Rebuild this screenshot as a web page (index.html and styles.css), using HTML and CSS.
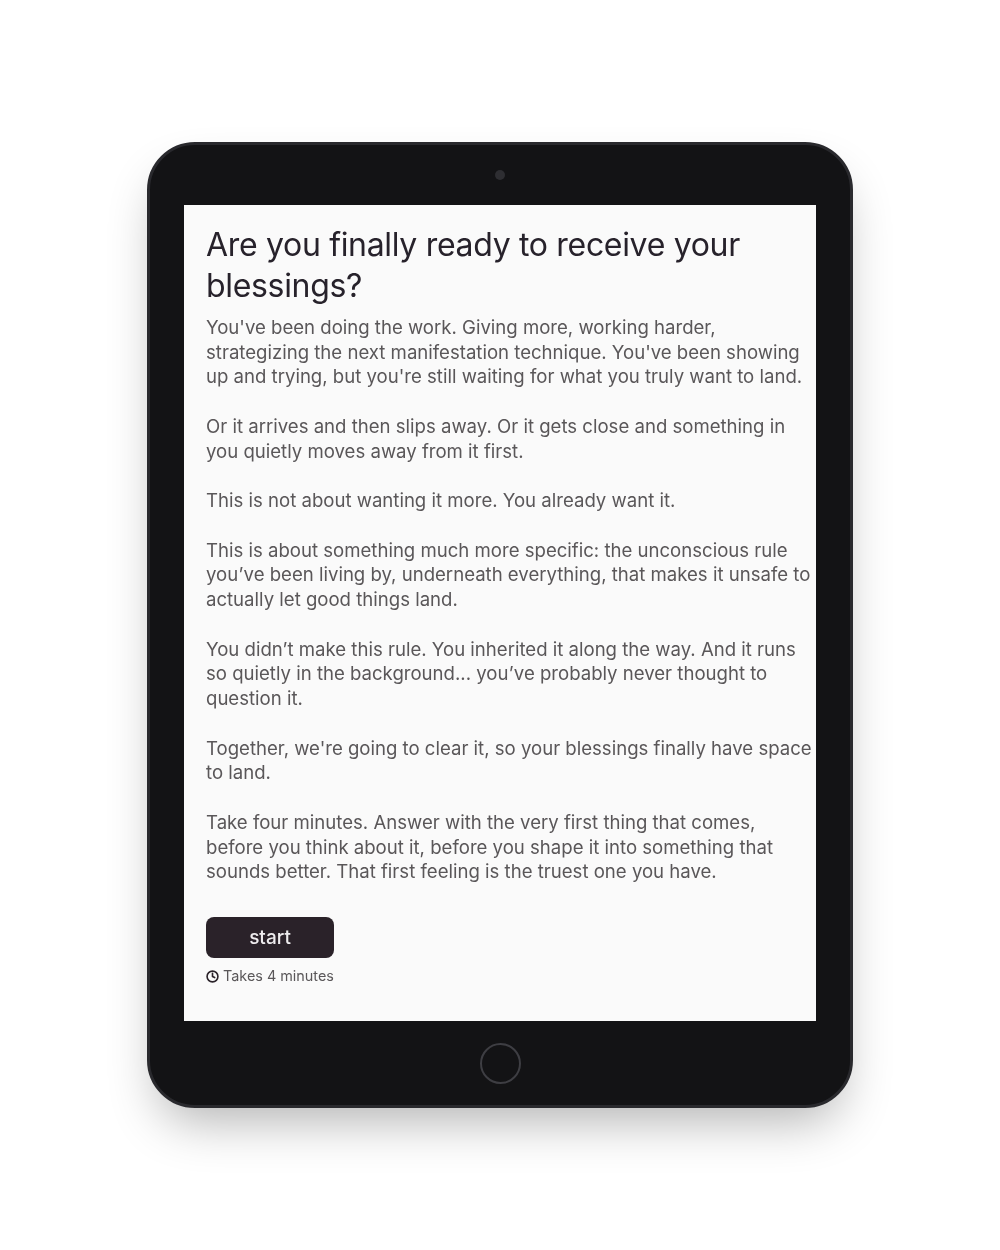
FILE: index.html
```html
<!DOCTYPE html>
<html lang="en">
<head>
    <meta charset="UTF-8">
    <meta name="viewport" content="width=device-width, initial-scale=1.0">
    <title>Are you finally ready to receive your blessings?</title>
    <link rel="stylesheet" href="styles.css">
</head>
<body>
    <div class="tablet">
        <div class="bezel-top">
            <div class="camera"></div>
        </div>
        <div class="screen">
            <h1>Are you finally ready to receive your blessings?</h1>
            <div class="intro">
                <p>You've been doing the work. Giving more, working harder, strategizing the next manifestation technique. You've been showing up and trying, but you're still waiting for what you truly want to land.</p>
                <p>Or it arrives and then slips away. Or it gets close and something in you quietly moves away from it first.</p>
                <p>This is not about wanting it more. You already want it.</p>
                <p>This is about something much more specific: the unconscious rule you’ve been living by, underneath everything, that makes it unsafe to actually let good things land.</p>
                <p>You didn’t make this rule. You inherited it along the way. And it runs so quietly in the background... you’ve probably never thought to question it.</p>
                <p>Together, we're going to clear it, so your blessings finally have space to land.</p>
                <p>Take four minutes. Answer with the very first thing that comes, before you think about it, before you shape it into something that sounds better. That first feeling is the truest one you have.</p>
            </div>
            <button type="button" class="start">start</button>
            <div class="duration">
                <svg class="clock" viewBox="0 0 24 24" fill="none" stroke="currentColor" stroke-width="3" stroke-linecap="round" stroke-linejoin="round">
                    <circle cx="12" cy="12" r="10"></circle>
                    <path d="M12 6v6l4 2"></path>
                </svg>
                <span>Takes 4 minutes</span>
            </div>
        </div>
        <div class="bezel-bottom">
            <div class="home"></div>
        </div>
    </div>
</body>
</html>
```

FILE: styles.css
```css
body {
    font-family: Inter, "Liberation Sans", sans-serif;
    margin: 0;
    height: 1250px;
    display: flex;
    justify-content: center;
    align-items: center;
    background-color: #fff;
}
.tablet {
    box-sizing: border-box;
    width: 706px;
    height: 966px;
    display: flex;
    flex-direction: column;
    padding: 0 34px;
    background-color: #131315;
    border: 3px solid #29292d;
    border-radius: 48px;
    box-shadow: 0 25px 50px -12px rgba(0, 0, 0, 0.3);
}
.bezel-top {
    height: 60px;
    display: flex;
    justify-content: center;
    align-items: center;
}
.camera {
    width: 10px;
    height: 10px;
    border-radius: 50%;
    background-color: #2e2e32;
}
.screen {
    box-sizing: border-box;
    height: 816px;
    padding: 19px 2px 0 22px;
    background-color: #fafafa;
    filter: blur(0.4px);
}
h1 {
    margin: 0 0 8.8px;
    font-size: 32px;
    font-weight: 400;
    line-height: 41px;
    letter-spacing: -0.32px;
    color: #27222b;
}
.intro p {
    margin: 0 0 24.75px;
    font-size: 18.58px;
    line-height: 24.75px;
    color: #5a5759;
}
.start {
    display: block;
    width: 128px;
    height: 41px;
    margin-top: 33.2px;
    padding: 0;
    font-family: inherit;
    font-size: 19px;
    font-weight: 500;
    color: #eeecee;
    background-color: #2a2229;
    border: none;
    border-radius: 8px;
    cursor: pointer;
}
.duration {
    display: flex;
    align-items: center;
    gap: 4px;
    margin-top: 8px;
    font-size: 14.4px;
    line-height: 20px;
    color: #5a5759;
}
.clock {
    width: 13px;
    height: 13px;
    color: #2a2229;
}
.bezel-bottom {
    flex: 1;
    display: flex;
    justify-content: center;
    align-items: center;
}
.home {
    box-sizing: border-box;
    width: 41px;
    height: 41px;
    border: 2px solid #3e3e43;
    border-radius: 50%;
}
```
